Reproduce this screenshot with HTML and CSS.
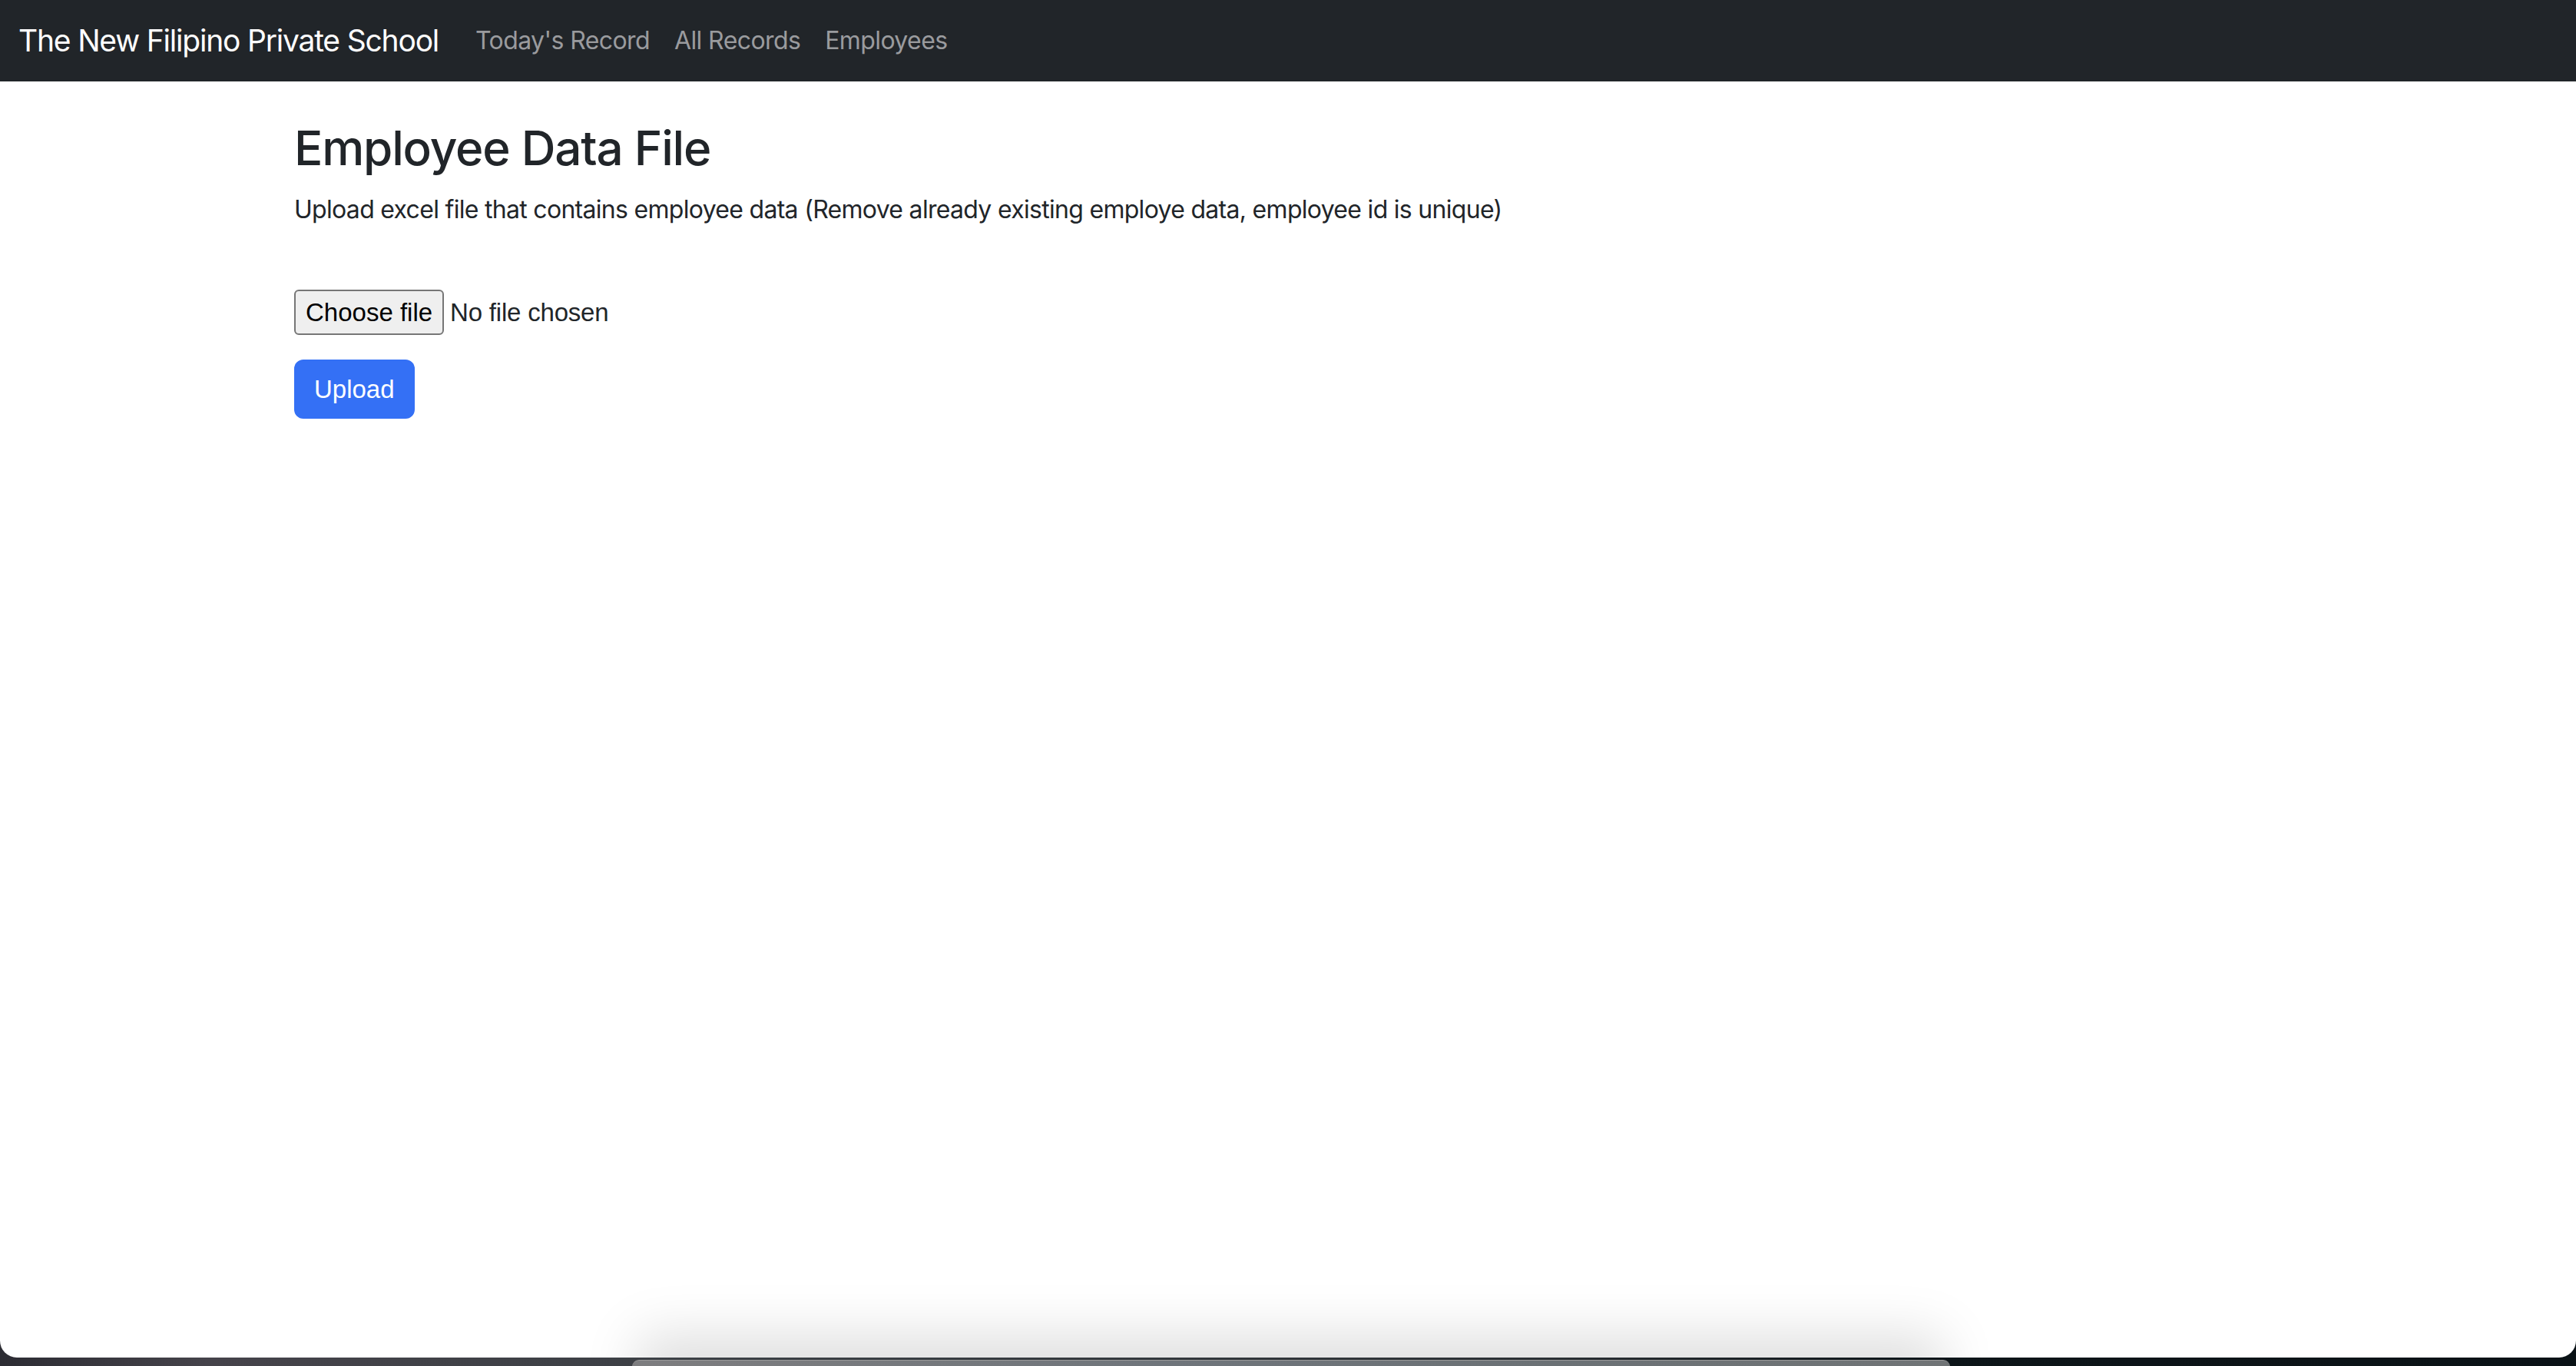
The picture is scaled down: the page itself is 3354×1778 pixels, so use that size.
FILE: index.html
```html
<!DOCTYPE html>
<html lang="en">
<head>
<meta charset="utf-8">
<title>Employee Data File</title>
<link rel="stylesheet" href="styles.css">
</head>
<body>
<div class="window">
  <nav class="navbar">
    <a class="brand" href="#">The New Filipino Private School</a>
    <ul class="nav-links">
      <li><a href="#">Today's Record</a></li>
      <li><a href="#">All Records</a></li>
      <li><a href="#">Employees</a></li>
    </ul>
  </nav>
  <main class="container">
    <h1 class="title">Employee Data File</h1>
    <p class="lead-text">Upload excel file that contains employee data (Remove already existing employe data, employee id is unique)</p>
    <form class="upload-form">
      <div class="file-row">
        <label class="file-input">
          <span class="file-button">Choose file</span>
          <span class="file-name">No file chosen</span>
        </label>
      </div>
      <button type="button" class="btn-primary">Upload</button>
    </form>
  </main>
  <div class="dock-shadow"></div>
</div>
<div class="desktop">
  <div class="dock"></div>
</div>
</body>
</html>
```

FILE: styles.css
```css
html, body {
  margin: 0;
  padding: 0;
}
body {
  width: 3354px;
  height: 1778px;
  overflow: hidden;
  background: linear-gradient(90deg, #2c2c33 0%, #45434a 8%, #3a3f44 30%, #2b3034 60%, #0d1519 75%, #0a1216 100%);
  font-family: Inter, "Noto Sans", sans-serif;
  color: #212529;
}
.window {
  position: relative;
  height: 1767px;
  background: #ffffff;
  border-radius: 0 0 22px 22px;
  overflow: hidden;
}
.navbar {
  display: flex;
  align-items: center;
  height: 106px;
  padding: 0 24px;
  background: #212529;
  box-sizing: border-box;
}
.brand {
  color: #ffffff;
  text-decoration: none;
  font-size: 39px;
  line-height: 60px;
  margin-right: 32px;
  letter-spacing: -1.2px;
}
.nav-links {
  display: flex;
  list-style: none;
  margin: 0;
  padding: 0;
}
.nav-links a {
  display: block;
  padding: 0 16px;
  color: #9a9b9e;
  text-decoration: none;
  font-size: 32px;
  line-height: 48px;
  letter-spacing: -0.6px;
}
.container {
  width: 2640px;
  margin: 0 auto;
  padding: 50px 22px 0 26px;
  box-sizing: border-box;
}
.title {
  margin: 0 0 19px;
  font-size: 62px;
  font-weight: 500;
  line-height: 1.2;
  letter-spacing: -1.2px;
}
.lead-text {
  margin: 0 0 80px;
  font-size: 32px;
  line-height: 48px;
  letter-spacing: -0.7px;
}
.file-row {
  margin-bottom: 32px;
}
.file-input {
  display: inline-flex;
  align-items: center;
  font-size: 32px;
}
.file-button {
  display: inline-block;
  height: 59px;
  line-height: 55px;
  box-sizing: border-box;
  padding: 0 13px;
  background: #efefef;
  border: 2px solid #767676;
  border-radius: 6px;
  color: #000000;
  font-family: "Liberation Sans", Arial, sans-serif;
  font-size: 33px;
}
.file-name {
  margin-left: 8px;
  font-family: "Liberation Sans", Arial, sans-serif;
  font-size: 33px;
  letter-spacing: -0.2px;
  color: #212529;
}
.btn-primary {
  display: block;
  height: 77px;
  padding: 0 26px;
  background: #3470f5;
  border: none;
  border-radius: 12px;
  color: #ffffff;
  font-family: "Liberation Sans", Arial, sans-serif;
  font-size: 33px;
}
.dock-shadow {
  position: absolute;
  left: 860px;
  width: 1640px;
  bottom: -40px;
  height: 40px;
  box-shadow: 0 0 70px 30px rgba(0, 0, 0, 0.13);
}
.desktop {
  height: 11px;
  padding-top: 3px;
  box-sizing: border-box;
}
.dock {
  margin-left: 823px;
  width: 1716px;
  height: 8px;
  border-radius: 12px 12px 0 0;
  background: linear-gradient(90deg, #7d7d7f 0%, #6f757b 40%, #6b7175 70%, #707476 100%);
  border-top: 1px solid #9a9a9a;
}
```
